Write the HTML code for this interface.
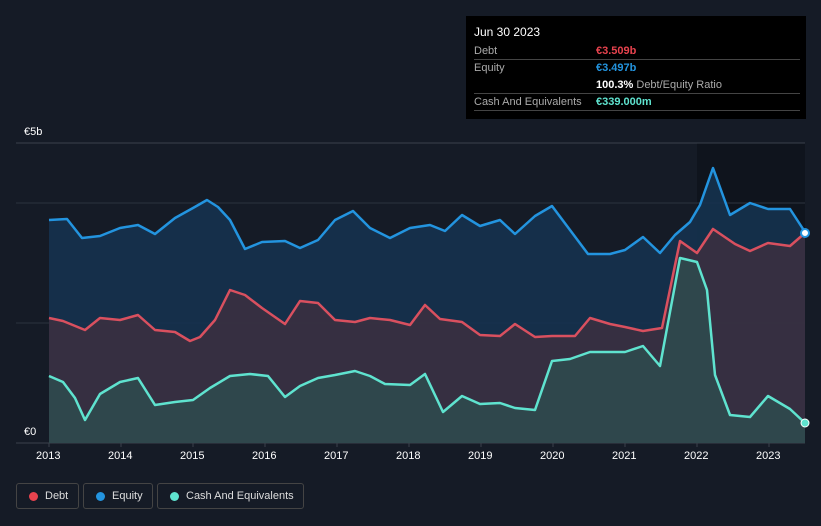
<!DOCTYPE html>
<html><head><meta charset="utf-8"><style>
body{margin:0;width:821px;height:526px;background:#151b26;font-family:"Liberation Sans",sans-serif;overflow:hidden;position:relative}
.tt{position:absolute;left:466px;top:16px;width:340px;height:103px;background:#000;color:#fff;font-size:11px}
.tt .r{position:absolute;left:8px;right:6px;border-bottom:1px solid #444;height:17px}
.lab{color:#aaa;position:absolute;left:0;top:3px}
.val{position:absolute;left:122px;top:3px;font-weight:bold}
.ax{position:absolute;color:#fff;font-size:11px}
.lg{position:absolute;top:483px;height:26px;border:1px solid #444;border-radius:3px;color:#ddd;font-size:11px;box-sizing:border-box;line-height:24px}
.lg i{position:absolute;left:12px;top:8px;width:9px;height:9px;border-radius:50%}
</style></head><body>
<svg width="821" height="526" style="position:absolute;left:0;top:0">
<rect x="697" y="143" width="108" height="300" fill="#0f141d"/>
<line x1="16" y1="143" x2="805" y2="143" stroke="#3a414c"/>
<line x1="16" y1="203" x2="805" y2="203" stroke="#2c333e"/>
<line x1="16" y1="323" x2="805" y2="323" stroke="#2c333e"/>
<line x1="16" y1="443" x2="805" y2="443" stroke="#3a414c"/>
<g stroke="#3a414c"><line x1="49" y1="443" x2="49" y2="447"/><line x1="121" y1="443" x2="121" y2="447"/><line x1="193" y1="443" x2="193" y2="447"/><line x1="265" y1="443" x2="265" y2="447"/><line x1="337" y1="443" x2="337" y2="447"/><line x1="409" y1="443" x2="409" y2="447"/><line x1="481" y1="443" x2="481" y2="447"/><line x1="553" y1="443" x2="553" y2="447"/><line x1="625" y1="443" x2="625" y2="447"/><line x1="697" y1="443" x2="697" y2="447"/><line x1="769" y1="443" x2="769" y2="447"/></g>
<polygon fill="#15324f" fill-opacity="0.9" points="49,443 49,220 67,219 82,238 100,236 120,228 138,225 155,234 175,218 193,208 207,200 218,207 230,220 245,249 262,242 285,241 300,248 318,240 335,220 353,211 370,228 390,238 410,228 430,225 445,231 462,215 480,226 500,220 515,234 535,216 552,206 570,230 588,254 610,254 625,250 643,237 660,253 675,235 690,222 700,205 713,168 730,215 750,203 768,209 790,209 805,232 805,443"/>
<polygon fill="#3a3040" fill-opacity="0.9" points="49,443 49,318 63,321 85,330 100,318 120,320 138,315 155,330 175,332 190,341 200,337 215,320 230,290 245,295 262,308 285,324 300,301 318,303 335,320 355,322 370,318 390,320 410,325 425,305 440,319 462,322 480,335 500,336 515,324 535,337 552,336 575,336 590,318 610,324 625,327 643,331 662,328 680,241 697,253 713,229 735,244 750,251 768,243 790,246 805,233 805,443"/>
<polygon fill="#2f4a4e" fill-opacity="0.9" points="49,443 49,376 63,382 75,398 85,420 100,394 120,382 138,378 155,405 175,402 193,400 210,388 230,376 250,374 268,376 285,397 300,386 318,378 335,375 355,371 370,376 385,384 410,385 425,374 443,412 462,396 480,404 500,403 515,408 535,410 552,361 570,359 590,352 610,352 625,352 643,346 660,366 680,258 697,262 707,290 715,375 730,415 750,417 768,396 790,409 805,423 805,443"/>
<polyline fill="none" stroke="#2394df" stroke-width="2.5" stroke-linejoin="round" points="49,220 67,219 82,238 100,236 120,228 138,225 155,234 175,218 193,208 207,200 218,207 230,220 245,249 262,242 285,241 300,248 318,240 335,220 353,211 370,228 390,238 410,228 430,225 445,231 462,215 480,226 500,220 515,234 535,216 552,206 570,230 588,254 610,254 625,250 643,237 660,253 675,235 690,222 700,205 713,168 730,215 750,203 768,209 790,209 805,232"/>
<polyline fill="none" stroke="#d9505f" stroke-width="2.5" stroke-linejoin="round" points="49,318 63,321 85,330 100,318 120,320 138,315 155,330 175,332 190,341 200,337 215,320 230,290 245,295 262,308 285,324 300,301 318,303 335,320 355,322 370,318 390,320 410,325 425,305 440,319 462,322 480,335 500,336 515,324 535,337 552,336 575,336 590,318 610,324 625,327 643,331 662,328 680,241 697,253 713,229 735,244 750,251 768,243 790,246 805,233"/>
<polyline fill="none" stroke="#5fe3cf" stroke-width="2.5" stroke-linejoin="round" points="49,376 63,382 75,398 85,420 100,394 120,382 138,378 155,405 175,402 193,400 210,388 230,376 250,374 268,376 285,397 300,386 318,378 335,375 355,371 370,376 385,384 410,385 425,374 443,412 462,396 480,404 500,403 515,408 535,410 552,361 570,359 590,352 610,352 625,352 643,346 660,366 680,258 697,262 707,290 715,375 730,415 750,417 768,396 790,409 805,423"/>
<circle cx="805" cy="233" r="4" fill="#fff" stroke="#2394df" stroke-width="2"/>
<circle cx="805" cy="423" r="4" fill="#5fe3cf" stroke="#fff" stroke-width="1"/>
</svg>
<div class="ax" style="left:24px;top:126px">€5b</div>
<div class="ax" style="left:24px;top:426px">€0</div>
<div class="ax" style="left:36px;top:450px">2013</div><div class="ax" style="left:108px;top:450px">2014</div><div class="ax" style="left:180px;top:450px">2015</div><div class="ax" style="left:252px;top:450px">2016</div><div class="ax" style="left:324px;top:450px">2017</div><div class="ax" style="left:396px;top:450px">2018</div><div class="ax" style="left:468px;top:450px">2019</div><div class="ax" style="left:540px;top:450px">2020</div><div class="ax" style="left:612px;top:450px">2021</div><div class="ax" style="left:684px;top:450px">2022</div><div class="ax" style="left:756px;top:450px">2023</div>
<div class="tt">
<div style="position:absolute;left:8px;top:9px;font-size:12px">Jun 30 2023</div>
<div class="r" style="top:26px"><span class="lab">Debt</span><span class="val" style="color:#e8434e">€3.509b</span></div>
<div class="r" style="top:43px;border:none"><span class="lab">Equity</span><span class="val" style="color:#2394df">€3.497b</span></div>
<div class="r" style="top:60px"><span class="val">100.3% <span style="color:#aaa;font-weight:normal">Debt/Equity Ratio</span></span></div>
<div class="r" style="top:77px"><span class="lab">Cash And Equivalents</span><span class="val" style="color:#5fe3cf">€339.000m</span></div>
</div>
<div class="lg" style="left:16px;width:63px"><i style="background:#e8434e"></i><span style="position:absolute;left:28px">Debt</span></div>
<div class="lg" style="left:83px;width:70px"><i style="background:#2394df"></i><span style="position:absolute;left:28px">Equity</span></div>
<div class="lg" style="left:157px;width:147px"><i style="background:#5fe3cf"></i><span style="position:absolute;left:28px">Cash And Equivalents</span></div>
</body></html>
